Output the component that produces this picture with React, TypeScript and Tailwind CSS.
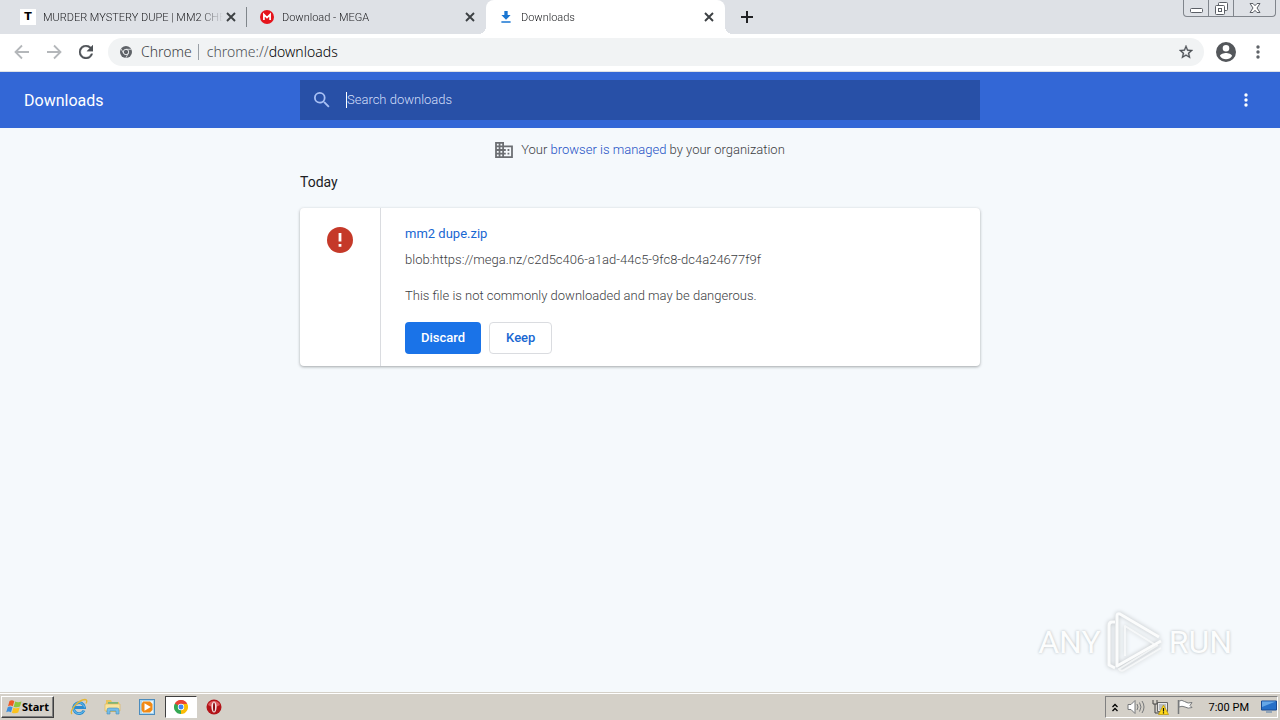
import React from "react";

const UI = "font-['Noto_Sans',sans-serif]";

function CloseIcon() {
  return (
    <svg viewBox="0 0 10 10" className="size-[10px]" fill="none" stroke="#3c4043" strokeWidth="1.9">
      <path d="M1 1l8 8M9 1l-8 8" />
    </svg>
  );
}

function ChromeMono() {
  return (
    <svg viewBox="0 0 24 24" className="size-3 shrink-0">
      <circle cx="12" cy="12" r="12" fill="#5f6368" />
      <circle cx="12" cy="12" r="5.4" fill="#5f6368" stroke="#f1f3f4" strokeWidth="1.8" />
      <path d="M12 6.6h11M7.3 14.7L2 5.6M16.7 14.7L11.5 24" stroke="#f1f3f4" strokeWidth="1.5" />
    </svg>
  );
}

function ChromeColor() {
  return (
    <svg viewBox="0 0 48 48" className="size-[14px]">
      <path d="M24 24L3.2 12A24 24 0 0 1 44.8 12z" fill="#ea4335" />
      <path d="M24 24L44.8 12A24 24 0 0 1 24 48z" fill="#fbbc05" />
      <path d="M24 24L24 48A24 24 0 0 1 3.2 12z" fill="#34a853" />
      <path d="M24 13h20.8L34 30z" fill="#fbbc05" />
      <path d="M14 30L3.2 12 24 13z" fill="#34a853" />
      <path d="M3.2 12A24 24 0 0 1 44.8 13H24L14 19z" fill="#ea4335" />
      <circle cx="24" cy="24" r="11" fill="#fff" />
      <circle cx="24" cy="24" r="8.5" fill="#4285f4" />
    </svg>
  );
}

function Dots({ className }: { className: string }) {
  return (
    <svg viewBox="0 0 4 14" className={className} fill="currentColor">
      <circle cx="2" cy="2" r="1.7" />
      <circle cx="2" cy="7" r="1.7" />
      <circle cx="2" cy="12" r="1.7" />
    </svg>
  );
}

function MegaIcon() {
  return (
    <svg viewBox="0 0 14 14" className="size-[14px]">
      <circle cx="7" cy="7" r="7" fill="#e5141c" />
      <path d="M3.9 9.9V4.6L7 7.6l3.1-3v5.3" fill="none" stroke="#fff" strokeWidth="1.7" />
    </svg>
  );
}

function DownloadIcon() {
  return (
    <svg viewBox="0 0 12 13" className="size-3" fill="#1976d2">
      <path d="M4.2 0h3.6v4.4H11L6 9.4 1 4.4h3.2zM1 11h10v1.8H1z" />
    </svg>
  );
}

function Tab({ icon, title, active, divider }: { icon: React.ReactNode; title: string; active?: boolean; divider?: boolean }) {
  return (
    <div className={`relative flex h-full min-w-0 basis-[239px] items-center pr-2 pl-3 ${active ? "rounded-t-lg bg-white" : ""}`}>
      <span className="flex size-4 shrink-0 items-center justify-center">{icon}</span>
      <span className="ml-[7px] flex-1 overflow-hidden pt-px text-[11px] leading-4 font-light whitespace-nowrap text-[#202124] [mask-image:linear-gradient(to_right,black_88%,transparent)]">
        {title}
      </span>
      <button aria-label={`Close ${title}`} className="flex size-4 shrink-0 items-center justify-center">
        <CloseIcon />
      </button>
      {divider && <span className="absolute right-0 h-5 w-px bg-[#80868b]" />}
      {active && (
        <>
          <span className="absolute bottom-0 -left-2 size-2 bg-[radial-gradient(circle_at_0_0,transparent_8px,white_8px)]" />
          <span className="absolute -right-2 bottom-0 size-2 bg-[radial-gradient(circle_at_100%_0,transparent_8px,white_8px)]" />
        </>
      )}
    </div>
  );
}

function TabStrip() {
  return (
    <header className="flex h-[34px] shrink-0 bg-[#dee1e6] pl-2">
      <Tab
        divider
        icon={<span className="flex size-4 items-center justify-center bg-white font-['DejaVu_Sans',sans-serif] text-[11px] font-bold text-black">T</span>}
        title="MURDER MYSTERY DUPE | MM2 CHE"
      />
      <Tab icon={<MegaIcon />} title="Download - MEGA" />
      <Tab active icon={<DownloadIcon />} title="Downloads" />
      <button aria-label="New tab" className="flex w-11 items-center justify-center">
        <svg viewBox="0 0 12 12" className="size-3" stroke="#202124" strokeWidth="2">
          <path d="M6 0v12M0 6h12" />
        </svg>
      </button>
      <div className="mr-1 ml-auto flex h-[17px] rounded-b border border-t-0 border-[#80858c] text-[#5b5f66]">
        <button aria-label="Minimize" className="flex w-[25px] items-center justify-center border-r border-[#80858c]">
          <svg viewBox="0 0 13 13" className="size-[13px]" fill="#fff" stroke="currentColor">
            <rect x=".5" y="6.5" width="12" height="4" rx="1" />
          </svg>
        </button>
        <button aria-label="Restore" className="flex w-[25px] items-center justify-center border-r border-[#80858c]">
          <svg viewBox="0 0 13 13" className="size-[13px]" fill="#fff" stroke="currentColor">
            <rect x="3.5" y=".5" width="9" height="8" rx="1" />
            <rect x=".5" y="3.5" width="9" height="9" rx="1" />
            <rect x="3.5" y="6.5" width="3" height="3" />
          </svg>
        </button>
        <button aria-label="Close" className="flex w-[41px] items-center justify-center">
          <svg viewBox="0 0 12 12" className="size-3" fill="#fff" stroke="currentColor">
            <path d="M1 1.5h3l2 2.2 2-2.2h3L8 6l3 4.5H8L6 8.3l-2 2.2H1L4 6z" />
          </svg>
        </button>
      </div>
    </header>
  );
}

function Toolbar() {
  return (
    <nav className="flex h-[38px] shrink-0 items-center border-b border-[#dfe2e6] bg-white pb-px">
      <button aria-label="Back" className="ml-[14px] flex size-4 items-center justify-center">
        <svg viewBox="0 0 16 16" className="size-4" fill="none" stroke="#b4b7ba" strokeWidth="1.8"><path d="M15 8H2M8 1.5L1.5 8 8 14.500" /></svg>
      </button>
      <button aria-label="Forward" className="ml-4 flex size-4 items-center justify-center">
        <svg viewBox="0 0 16 16" className="size-4" fill="none" stroke="#b4b7ba" strokeWidth="1.8"><path d="M1 8h13M8 1.500L14.500 8 8 14.500" /></svg>
      </button>
      <button aria-label="Reload" className="ml-4 flex size-4 items-center justify-center">
        <svg viewBox="4 4 16 16" className="size-[14px]" fill="#4d5156" stroke="#4d5156" strokeWidth=".4">
          <path d="M17.650 6.350A7.958 7.958 0 0 0 12 4a8 8 0 1 0 7.730 10h-2.080A5.990 5.990 0 0 1 12 18a6 6 0 1 1 4.220-10.220L13 11h7V4z" />
        </svg>
      </button>
      <div className="ml-[14px] flex h-7 flex-1 items-center rounded-full bg-[#f1f3f4] pr-[11px] pl-3">
        <ChromeMono />
        <label htmlFor="address" className={`ml-[9px] text-sm leading-5 font-light text-[#3c4043] ${UI}`}>Chrome</label>
        <span className="mr-2 ml-[6px] h-4 w-px bg-[#9aa0a6]" />
        <span className={`relative flex-1 text-sm leading-5 font-light text-[#4d5156] ${UI}`}>
          <span aria-hidden="true">chrome://<span className="text-black">downloads</span></span>
          <input id="address" defaultValue="chrome://downloads" className="absolute inset-0 w-full bg-transparent text-transparent outline-none" />
        </span>
        <button aria-label="Bookmark this page">
          <svg viewBox="2 2 20 20" className="size-[14px]" fill="#4d5156" stroke="#4d5156" strokeWidth=".4">
            <path d="M22 9.240l-7.190-.62L12 2 9.190 8.630 2 9.240l5.460 4.730L5.820 21 12 17.270 18.180 21l-1.630-7.030zM12 15.400l-3.760 2.270 1-4.280-3.320-2.880 4.380-.38L12 6.100l1.710 4.040 4.380.38-3.320 2.880 1 4.280z" />
          </svg>
        </button>
      </div>
      <button aria-label="Profile" className="ml-3">
        <svg viewBox="2 2 20 20" className="size-[20px]" fill="#54575b">
          <path d="M12 2a10 10 0 1 0 0 20 10 10 0 0 0 0-20zm0 3a3.300 3.300 0 1 1 0 6.600 3.300 3.300 0 0 1 0-6.600zm0 14.200a7.200 7.200 0 0 1-6-3.220c.03-1.990 4-3.080 6-3.080s5.970 1.090 6 3.080a7.200 7.200 0 0 1-6 3.220z" />
        </svg>
      </button>
      <button aria-label="Browser menu" className="mr-5 ml-5 text-[#5f6368]">
        <Dots className="h-[14px] w-1" />
      </button>
    </nav>
  );
}

function DownloadsHeader() {
  return (
    <div className="grid h-14 shrink-0 grid-cols-[1fr_minmax(0,680px)_1fr] items-center bg-[#3367d6] text-white">
      <h1 className="pt-px pl-6 text-base leading-6">Downloads</h1>
      <div className="flex h-10 items-center bg-[#2850a7] pl-[14px]">
        <svg viewBox="3 3 18 18" className="size-4" fill="#a9c1f5">
          <path d="M15.500 14h-.79l-.28-.27A6.471 6.471 0 0 0 16 9.500 6.500 6.500 0 1 0 9.500 16c1.610 0 3.090-.59 4.230-1.570l.27.28v.79l5 4.990L20.490 19zm-6 0a4.500 4.500 0 1 1 0-9 4.500 4.500 0 0 1 0 9z" />
        </svg>
        <span className="ml-4 h-4 w-px bg-white" />
        <input aria-label="Search downloads" placeholder="Search downloads" className="min-w-0 flex-1 bg-transparent text-[13px] font-light outline-none placeholder:text-[#d3dffa]" />
      </div>
      <div className="flex justify-end pr-8">
        <button aria-label="More actions"><Dots className="h-[14px] w-1" /></button>
      </div>
    </div>
  );
}

function Watermark() {
  const word = "text-[32px] leading-[60px] text-[#fcfdfd] [text-shadow:0_0_3px_#b5babd]";
  return (
    <div className="absolute right-12 bottom-[18px] flex items-center">
      <span className={word}>ANY</span>
      <svg viewBox="0 0 60 64" className="mx-1 h-16 w-[60px] drop-shadow-[0_0_2px_#b9bdc0]" fill="none" stroke="#fbfcfc" strokeWidth="3" strokeLinejoin="round">
        <path d="M10 12H7q-3 0-3 4v39l6 3" />
        <path d="M54 27L15 4q-3-1-3 2v50l44-25" />
        <path d="M49 34L20 16v30M56 38L19 60q-3 2-5-1l39-24" strokeOpacity=".75" strokeWidth="2" />
      </svg>
      <span className={word}>RUN</span>
    </div>
  );
}

function Content() {
  return (
    <main className="relative flex-1 overflow-hidden bg-[#f5f9fc]">
      <p className="flex h-11 items-center justify-center text-[13px] font-light text-[#3c4043]">
        <svg viewBox="2 3 20 18" className="mr-2 h-4 w-[18px]" fill="#6b6e72">
          <path d="M12 7V3H2v18h20V7zM6 19H4v-2h2zm0-4H4v-2h2zm0-4H4V9h2zm0-4H4V5h2zm4 12H8v-2h2zm0-4H8v-2h2zm0-4H8V9h2zm0-4H8V5h2zm10 12h-8v-2h2v-2h-2v-2h2v-2h-2V9h8zm-2-8h-2v2h2zm0 4h-2v2h2z" />
        </svg>
        <span>Your <a href="#managed" className="text-[#1b50c4]">browser is managed</a> by your organization</span>
      </p>
      <section className="mx-auto max-w-[680px]">
        <h2 className="text-sm leading-5 text-[#202124]">Today</h2>
        <article className="mt-4 flex rounded bg-white shadow-[0_1px_3px_rgba(60,64,67,.45)]">
          <div className="flex w-[81px] shrink-0 justify-center border-r border-[#dadce0] pt-[19px]">
            <svg viewBox="0 0 26 26" className="size-[26px]">
              <circle cx="13" cy="13" r="13" fill="#c53929" />
              <path d="M11.600 6h2.800v8.500h-2.800zM11.600 17h2.800v2.800h-2.800z" fill="#fff" />
            </svg>
          </div>
          <div className="min-w-0 flex-1 px-6 pt-4 pb-3 text-[13px] leading-5 font-light text-[#3c4043]">
            <a href="#file" className="font-normal text-[#1967d2]">mm2 dupe.zip</a>
            <p className="mt-[6px]">blob:https://mega.nz/c2d5c406-a1ad-44c5-9fc8-dc4a24677f9f</p>
            <p className="mt-4">This file is not commonly downloaded and may be dangerous.</p>
            <div className="mt-4 flex gap-2 font-medium">
              <button className="h-8 rounded bg-[#1a73e8] px-4 text-white">Discard</button>
              <button className="h-8 rounded border border-[#dadce0] px-4 text-[#1967d2]">Keep</button>
            </div>
          </div>
        </article>
      </section>
      <Watermark />
    </main>
  );
}

function WindowsFlag() {
  return (
    <svg viewBox="0 0 16 16" className="size-4">
      <path d="M3.500 2Q6 .5 8.300 2.200L6.800 7.300Q4.500 6 2 7.200z" fill="#ee5a25" />
      <path d="M9.200 2.600Q12 4 15.500 2.500L14 7.500Q10.500 9 7.700 7.700z" fill="#8cc63e" />
      <path d="M1.700 8.200Q4.200 7 6.500 8.300L5 13.300Q2.600 12 .2 13.200z" fill="#3b8ede" />
      <path d="M7.400 8.700Q10.500 10 13.700 8.600L12.200 13.600Q9 15 5.900 13.700z" fill="#fbc21d" />
    </svg>
  );
}

function IEIcon() {
  return (
    <svg viewBox="0 0 18 18" className="size-[18px]" fill="none">
      <path d="M14 12.500A5.500 5.500 0 1 1 14.500 9.500H5" stroke="#2b8bd0" strokeWidth="2.800" />
      <path d="M14 12.500A5.500 5.500 0 1 1 14.500 9.500" stroke="#6dc3ee" strokeWidth="1" />
      <path d="M2 16C-1 13 8 2 15 1.500q3 .2 1 4" stroke="#e5b634" strokeWidth="1.300" />
    </svg>
  );
}

function FolderIcon() {
  return (
    <svg viewBox="0 0 18 18" className="size-[18px]">
      <path d="M2 2h5l1 2h7v10H2z" fill="#e8c45b" />
      <path d="M4 4h10v7H4z" fill="#7db77a" />
      <path d="M1 6h15v7H1z" fill="#f8e49d" stroke="#dcb451" strokeWidth=".6" />
      <path d="M3 16v-4q0-2 2-2h8q2 0 2 2v4h-3v-3H6v3z" fill="#75bde8" stroke="#488dbb" strokeWidth=".6" />
    </svg>
  );
}

function MediaIcon() {
  return (
    <svg viewBox="0 0 16 16" className="size-4">
      <rect x=".5" y=".5" width="15" height="15" fill="#a9d6f1" stroke="#4c8cbd" />
      <rect x="3" y="2" width="11" height="12" fill="#e8f5fc" />
      <path d="M4 2.500h7l2.500 2.500v6L11 13.500H4L2.500 11V5z" fill="#f28a14" />
      <path d="M5.500 4.200v7.600L11.800 8z" fill="#fff" />
    </svg>
  );
}

function OperaIcon() {
  return (
    <svg viewBox="0 0 16 16" className="size-4">
      <circle cx="8" cy="8" r="7.500" fill="#b31419" />
      <path d="M2 6a6.500 6.500 0 0 1 12 0q-6 4-12 0z" fill="#df5a5e" />
      <ellipse cx="8" cy="8" rx="2.600" ry="5.500" fill="#f5e6e6" />
      <ellipse cx="8" cy="8" rx="1" ry="4.500" fill="#8d0c12" />
    </svg>
  );
}

function Taskbar() {
  return (
    <footer className="flex h-7 shrink-0 items-center border-t border-[#d4d0c8] bg-[#d4d0c8] pt-px text-[11px] text-black shadow-[inset_0_1px_0_white]">
      <button className={`ml-px flex h-[22px] w-[53px] items-center justify-center border border-t-white border-r-[#404040] border-b-[#404040] border-l-white font-bold shadow-[inset_-1px_-1px_0_#808080] ${UI}`}>
        <WindowsFlag />
        <span>Start</span>
      </button>
      <button aria-label="Internet Explorer" className="ml-2 flex w-[34px] justify-center"><IEIcon /></button>
      <button aria-label="Windows Explorer" className="flex w-[34px] justify-center"><FolderIcon /></button>
      <button aria-label="Media Player" className="flex w-[34px] justify-center"><MediaIcon /></button>
      <button aria-label="Chrome" className="ml-px flex h-[22px] w-8 items-center justify-center border border-t-[#404040] border-r-white border-b-white border-l-[#404040] bg-white"><ChromeColor /></button>
      <button aria-label="Opera" className="flex w-[34px] justify-center"><OperaIcon /></button>
      <div className="mr-[2px] ml-auto flex h-[22px] items-center border border-t-[#808080] border-r-white border-b-white border-l-[#808080] pl-[6px]">
        <button aria-label="Show hidden icons">
          <svg viewBox="0 0 6 9" className="h-[9px] w-[6px]" fill="none" stroke="#000" strokeWidth="1.300"><path d="M.5 4L3 1.500 5.500 4M.5 8L3 5.500 5.500 8" /></svg>
        </button>
        <svg viewBox="0 0 18 16" className="ml-[9px] h-4 w-[18px]" fill="none" stroke="#77797b">
          <path d="M1 5.500h3l4-4v13l-4-4H1z" fill="#fff" />
          <path d="M10 5q2 3 0 6M12.500 3.500q3 4.500 0 9M15 2q4 6 0 12" />
        </svg>
        <svg viewBox="0 0 17 16" className="ml-[7px] h-4 w-[17px]">
          <path d="M5.500 3.500h10v9h-10z" fill="#e8e8e8" stroke="#666" />
          <path d="M7 5h7v6H7z" fill="#b9bec3" />
          <path d="M1 1v4h4V1M3 5v9h4" stroke="#444" fill="none" />
          <path d="M11.500 6L16.500 15.500h-10z" fill="#ffd91a" stroke="#b89200" strokeWidth=".7" />
          <path d="M11.500 9v3.500M11.500 13.200v1.200" stroke="#111" strokeWidth="1.200" />
        </svg>
        <svg viewBox="0 0 16 16" className="ml-2 size-4" stroke="#77797b">
          <path d="M1.500 1v14" strokeWidth="1.500" />
          <path d="M2 2q3-1.500 5.500.5Q11 5 15 3.500l-2 3 2 2q-4 1.500-7-.5-3-1.500-6 0z" fill="#fff" />
        </svg>
        <time className="ml-4 pt-px leading-4">7:00 PM</time>
        <svg viewBox="0 0 16 14" className="ml-3 h-[14px] w-4">
          <path d="M.5 1h15v9H.5z" fill="#2670c8" stroke="#174a94" />
          <path d="M1 1.500h14L1 7z" fill="#65a7e7" />
          <path d="M5 11.500h6v1H5z" fill="#557ca8" />
        </svg>
      </div>
    </footer>
  );
}

export default function App() {
  return (
    <div className="flex h-screen flex-col overflow-hidden font-[Roboto,sans-serif]">
      <TabStrip />
      <Toolbar />
      <DownloadsHeader />
      <Content />
      <Taskbar />
    </div>
  );
}
